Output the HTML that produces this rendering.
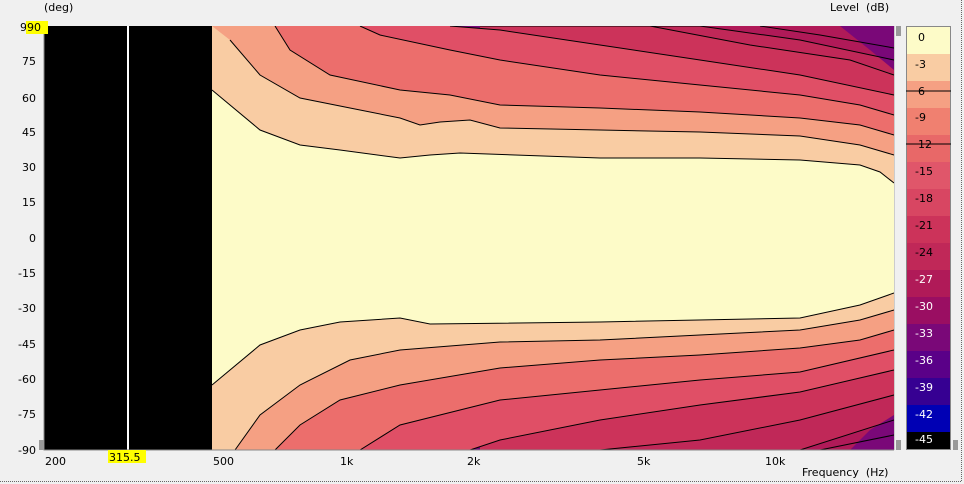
<!DOCTYPE html>
<html><head><style>
body{margin:0;width:964px;height:484px;background:#f0f0f0;font-family:"DejaVu Sans","Liberation Sans",sans-serif;font-size:11px;overflow:hidden;position:relative}
.t{position:absolute;color:#000;white-space:nowrap}
</style></head><body>
<div class="t" style="left:44px;top:1px">(deg)</div>
<div class="t" style="left:830px;top:1px">Level&nbsp; (dB)</div>
<div class="t" style="left:802px;top:466px">Frequency&nbsp; (Hz)</div>
<svg width="964" height="484" style="position:absolute;left:0;top:0" font-family="DejaVu Sans, Liberation Sans, sans-serif" font-size="11">
<defs><clipPath id="c"><rect x="44" y="26" width="850" height="424"/></clipPath></defs>
<g clip-path="url(#c)">
<rect x="44" y="26" width="850" height="424" fill="#7a0878"/>
<path d="M600,26 L894,26 894,450 600,450 Z" fill="#b01a58"/>
<path d="M520,26 L700,26 800,40 894,60 894,420 800,450 520,450Z" fill="#c02858"/>
<path d="M480,26 L650,26 750,45 850,60 894,75 894,395 800,420 700,440 600,450 480,450Z" fill="#cc335a"/>
<path d="M212,26 L450,26 500,30 600,45 700,60 800,75 894,95 894,370 800,392 700,405 600,420 500,440 470,450 212,450Z" fill="#e04f66"/>
<path d="M212,26 L360,26 380,35 450,50 500,60 600,75 700,85 800,95 860,105 894,115 894,350 800,372 700,380 600,390 500,400 400,425 360,450 212,450Z" fill="#ec6e6c"/>
<path d="M212,26 L275,26 290,50 330,75 400,90 450,95 500,105 600,108 700,112 800,118 860,125 894,135 894,330 860,340 800,348 700,355 600,360 500,368 400,385 340,400 300,425 275,450 212,450Z" fill="#f5a083"/>
<path d="M212,26 L230,40 260,75 300,98 350,108 400,118 420,125 440,122 470,120 500,128 600,130 700,132 800,136 860,145 894,155 894,310 860,320 800,330 700,335 600,340 500,342 400,350 350,360 300,385 260,415 235,450 212,450Z" fill="#f9cca3"/>
<path d="M212,90 L260,130 300,145 340,150 400,158 430,155 460,153 600,158 700,158 800,160 860,165 880,172 894,183 894,293 860,305 800,318 600,322 430,324 400,318 340,322 300,330 260,345 212,385Z" fill="#fdfbc8"/>
<path d="M840,26 L894,26 894,70 870,50Z" fill="#7a0878"/>
<path d="M850,450 L894,450 894,415 870,430Z" fill="#7a0878"/>
<g fill="none" stroke="#000" stroke-width="1">
<path d="M212,90 L260,130 300,145 340,150 400,158 430,155 460,153 600,158 700,158 800,160 860,165 880,172 894,183"/>
<path d="M212,385 L260,345 300,330 340,322 400,318 430,324 600,322 800,318 860,305 894,293"/>
<path d="M230,40 260,75 300,98 350,108 400,118 420,125 440,122 470,120 500,128 600,130 700,132 800,136 860,145 894,155"/>
<path d="M235,450 260,415 300,385 350,360 400,350 500,342 600,340 700,335 800,330 860,320 894,310"/>
<path d="M275,26 290,50 330,75 400,90 450,95 500,105 600,108 700,112 800,118 860,125 894,135"/>
<path d="M275,450 300,425 340,400 400,385 500,368 600,360 700,355 800,348 860,340 894,330"/>
<path d="M360,26 380,35 450,50 500,60 600,75 700,85 800,95 860,105 894,115"/>
<path d="M360,450 400,425 500,400 600,390 700,380 800,372 894,350"/>
<path d="M450,26 500,30 600,45 700,60 800,75 894,95"/>
<path d="M470,450 500,440 600,420 700,405 800,392 894,370"/>
<path d="M480,26 650,26 750,45 850,60 894,75"/>
<path d="M600,450 700,440 800,420 894,395"/>
<path d="M520,26 700,26 800,40 894,60"/>
<path d="M800,450 894,420"/>
<path d="M760,26 820,35 894,48"/>
<path d="M820,450 894,435"/>
</g>
<rect x="44" y="26" width="168" height="424" fill="#000"/>
<rect x="127" y="26" width="2" height="424" fill="#fff"/>
</g>
<path d="M44,26 V450 H894" fill="none" stroke="#888"/>
<rect x="894" y="26" width="1" height="424" fill="#ccc"/>
<rect x="896" y="26" width="5" height="10" fill="#999"/>
<rect x="896" y="440" width="5" height="10" fill="#999"/>
<rect x="39" y="440" width="5" height="10" fill="#999"/>
<g>
<rect x="907" y="26" width="44" height="28" fill="#fdfbc8"/>
<rect x="907" y="54" width="44" height="27" fill="#f9cca3"/>
<rect x="907" y="81" width="44" height="27" fill="#f5a083"/>
<rect x="907" y="108" width="44" height="27" fill="#f08070"/>
<rect x="907" y="135" width="44" height="27" fill="#e86868"/>
<rect x="907" y="162" width="44" height="27" fill="#e0566a"/>
<rect x="907" y="189" width="44" height="27" fill="#d84662"/>
<rect x="907" y="216" width="44" height="27" fill="#cc335a"/>
<rect x="907" y="243" width="44" height="27" fill="#c02858"/>
<rect x="907" y="270" width="44" height="27" fill="#b01a58"/>
<rect x="907" y="297" width="44" height="27" fill="#9a0e62"/>
<rect x="907" y="324" width="44" height="27" fill="#7a0878"/>
<rect x="907" y="351" width="44" height="27" fill="#5a0088"/>
<rect x="907" y="378" width="44" height="27" fill="#360092"/>
<rect x="907" y="405" width="44" height="27" fill="#0000b4"/>
<rect x="907" y="432" width="44" height="18" fill="#000"/>
<rect x="906.5" y="26.5" width="44" height="423" fill="none" stroke="#888"/>
<line x1="906" y1="91" x2="951" y2="91" stroke="#000"/>
<line x1="906" y1="144" x2="951" y2="144" stroke="#000"/>
<rect x="953" y="440" width="5" height="10" fill="#999"/>
<g fill="#000">
<text x="918" y="41">0</text><text x="915" y="68">-3</text><text x="918" y="95">6</text>
<text x="915" y="121">-9</text><text x="918" y="148">12</text><text x="915" y="175">-15</text>
<text x="915" y="202">-18</text><text x="915" y="229">-21</text><text x="915" y="256">-24</text>
</g>
<g fill="#fff">
<text x="915" y="283">-27</text><text x="915" y="310">-30</text><text x="915" y="337">-33</text>
<text x="915" y="364">-36</text><text x="915" y="391">-39</text><text x="915" y="418">-42</text><text x="915" y="443">-45</text>
</g>
</g>
<line x1="961.5" y1="0" x2="961.5" y2="482" stroke="#666" stroke-dasharray="1,1"/>
<line x1="0" y1="481.5" x2="962" y2="481.5" stroke="#666" stroke-dasharray="1,1"/>
<g text-anchor="end" fill="#000">
<text x="36" y="65">75</text><text x="36" y="102">60</text><text x="36" y="136">45</text>
<text x="36" y="171">30</text><text x="36" y="206">15</text><text x="36" y="242">0</text>
<text x="36" y="277">-15</text><text x="36" y="312">-30</text><text x="36" y="348">-45</text>
<text x="36" y="383">-60</text><text x="36" y="418">-75</text><text x="36" y="454">-90</text>
</g>
<text x="20" y="31">9</text>
<rect x="26" y="21" width="22" height="13" fill="#ffff00"/>
<text x="27" y="31">90</text>
<g fill="#000">
<text x="45" y="465">200</text><text x="213" y="465">500</text><text x="340" y="465">1k</text>
<text x="467" y="465">2k</text><text x="637" y="465">5k</text><text x="765" y="465">10k</text>
</g>
<rect x="108" y="450" width="38" height="13" fill="#ffff00"/>
<text x="109" y="461">315.5</text>
</svg>
</body></html>
